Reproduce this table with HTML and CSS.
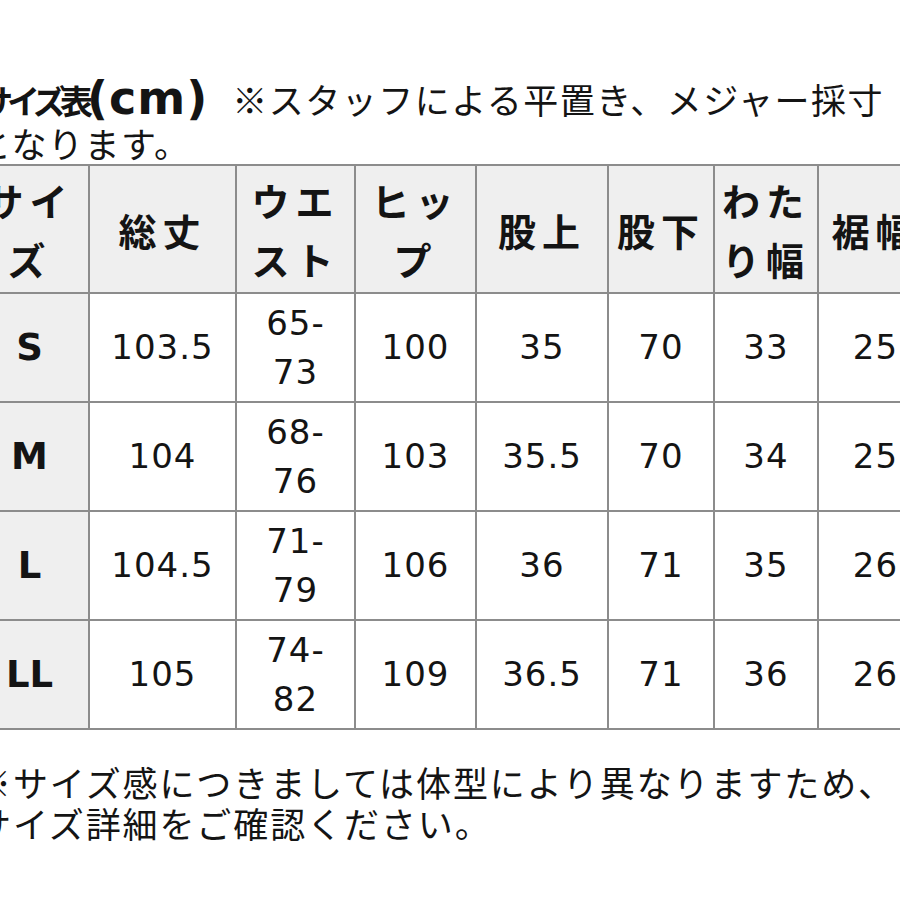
FILE: index.html
```html
<!DOCTYPE html>
<html lang="ja">
<head>
<meta charset="utf-8">
<title>サイズ表</title>
<link rel="stylesheet" href="styles.css">
</head>
<body>
<div class="page">
  <p class="note-top"><span class="title"><span class="title-ja">サイズ表</span><span class="title-unit">(cm) </span></span>※スタッフによる平置き、メジャー採寸<br>となります。</p>

  <div class="size-table">
    <div class="cell head label">サイズ</div>
    <div class="cell head">総丈</div>
    <div class="cell head">ウエスト</div>
    <div class="cell head">ヒップ</div>
    <div class="cell head">股上</div>
    <div class="cell head">股下</div>
    <div class="cell head">わたり幅</div>
    <div class="cell head">裾幅</div>

    <div class="cell label">S</div>
    <div class="cell num">103.5</div>
    <div class="cell num">65-<br>73</div>
    <div class="cell num">100</div>
    <div class="cell num">35</div>
    <div class="cell num">70</div>
    <div class="cell num">33</div>
    <div class="cell num">25</div>

    <div class="cell label">M</div>
    <div class="cell num">104</div>
    <div class="cell num">68-<br>76</div>
    <div class="cell num">103</div>
    <div class="cell num">35.5</div>
    <div class="cell num">70</div>
    <div class="cell num">34</div>
    <div class="cell num">25</div>

    <div class="cell label">L</div>
    <div class="cell num">104.5</div>
    <div class="cell num">71-<br>79</div>
    <div class="cell num">106</div>
    <div class="cell num">36</div>
    <div class="cell num">71</div>
    <div class="cell num">35</div>
    <div class="cell num">26</div>

    <div class="cell label">LL</div>
    <div class="cell num">105</div>
    <div class="cell num">74-<br>82</div>
    <div class="cell num">109</div>
    <div class="cell num">36.5</div>
    <div class="cell num">71</div>
    <div class="cell num">36</div>
    <div class="cell num">26</div>
  </div>

  <p class="note-bottom">※サイズ感につきましては体型により異なりますため、<br>サイズ詳細をご確認ください。</p>
</div>
</body>
</html>
```

FILE: styles.css
```css
html, body {
  margin: 0;
  padding: 0;
  background: #ffffff;
}

body {
  width: 900px;
  height: 900px;
  overflow: hidden;
  color: #141414;
  font-family: "Noto Sans CJK JP", "Noto Sans", sans-serif;
}

.page {
  width: 900px;
  overflow: hidden;
}

.note-top {
  box-sizing: border-box;
  height: 164px;
  margin: 0 0 0 -24px;
  padding-top: 77px;
  font-size: 35px;
  line-height: 44px;
  letter-spacing: 1.5px;
  white-space: nowrap;
}

.title {
  font-weight: 700;
  padding-left: 4px;
}

.title-ja {
  font-size: 33px;
  line-height: 0;
  letter-spacing: -6px;
}

.title-unit {
  font-family: "DejaVu Sans", sans-serif;
  font-size: 46px;
  line-height: 0;
  letter-spacing: 1px;
  margin-right: 7px;
}

.size-table {
  margin: 0 0 0 -31px;
  width: 960px;
  display: grid;
  grid-template-columns: 117px 145px 117px 119px 130px 104px 102px 113px;
  grid-template-rows: 126px 107px 107px 107px 107px;
  gap: 2px;
  padding: 2px;
  background: #8c8c8c;
}

.cell {
  display: flex;
  align-items: center;
  justify-content: center;
  text-align: center;
  background: #ffffff;
}

.head {
  background: #efefef;
  font-family: "Noto Sans CJK JP", sans-serif;
  font-weight: 700;
  font-size: 38px;
  line-height: 59px;
  letter-spacing: 6px;
}

.label {
  background: #efefef;
}

.label:not(.head) {
  font-family: "DejaVu Sans", sans-serif;
  font-weight: 700;
  font-size: 37px;
}

.num {
  font-family: "DejaVu Sans", sans-serif;
  font-size: 34px;
  line-height: 49px;
  letter-spacing: 1px;
}

.note-bottom {
  margin: 31px 0 0 -24px;
  font-size: 35px;
  line-height: 41px;
  letter-spacing: 1.9px;
  white-space: nowrap;
}
```
